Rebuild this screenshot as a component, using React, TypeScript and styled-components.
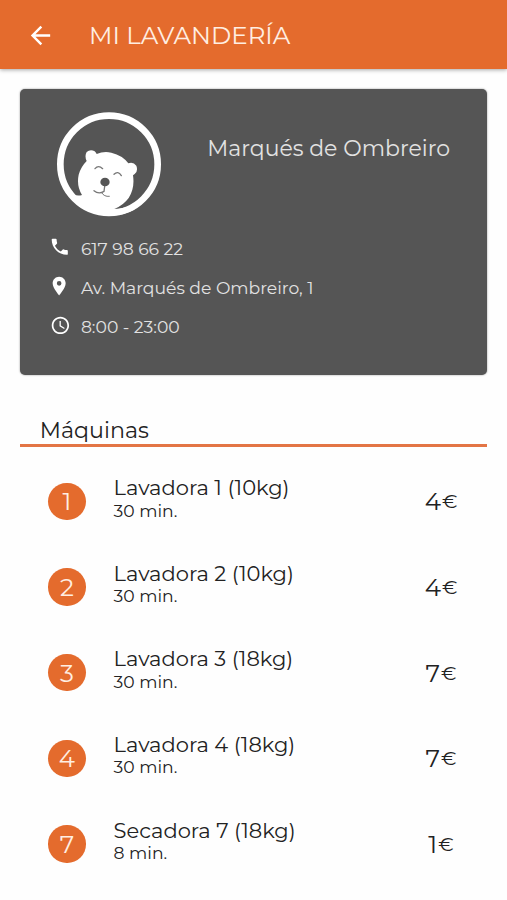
import React from "react";
import styled, { createGlobalStyle } from "styled-components";
import { MdAccessTime, MdArrowBack, MdLocationOn, MdPhone } from "react-icons/md";

const ORANGE = "#e46b2d";

const GlobalStyle = createGlobalStyle`
  * { box-sizing: border-box; }
  body {
    margin: 0;
    background: #fefefe;
    color: #222;
    font-family: Montserrat, Inter, sans-serif;
    font-weight: 400;
  }
`;

const Page = styled.div`
  width: 507px;
  height: 900px;
  overflow: hidden;
  display: flex;
  flex-direction: column;
`;

const Header = styled.header`
  flex: none;
  height: 69px;
  padding: 2px 0 0 25.5px;
  display: flex;
  align-items: center;
  background: ${ORANGE};
  color: #ffeee2;
  box-shadow: 0 1px 4px rgba(0, 0, 0, 0.35);
`;

const BackButton = styled.button`
  display: flex;
  padding: 0;
  border: 0;
  background: none;
  color: #fff;
  font-size: 29px;
`;

const Title = styled.h1`
  margin: 0 0 2px 34.5px;
  font-size: 24.5px;
  font-weight: 400;
  line-height: 30px;
  white-space: nowrap;
`;

const Card = styled.section`
  flex: none;
  height: 286px;
  margin: 20px 19.6px 0 20.4px;
  padding: 23px 0 0;
  display: flex;
  flex-direction: column;
  border-radius: 5px;
  background: #555;
  color: #e2e2e2;
  box-shadow: 0 0 2px rgba(0, 0, 0, 0.45);
`;

const CardTop = styled.div`
  height: 105px;
  padding-left: 36.5px;
  display: flex;
  align-items: flex-start;
`;

const Logo = styled.svg`
  flex: none;
  width: 104px;
  height: 105px;
`;

const ShopName = styled.h2`
  margin: 21px 0 0 46.3px;
  font-size: 22px;
  font-weight: 400;
  line-height: 31px;
  white-space: nowrap;
`;

const InfoList = styled.ul`
  margin: 12.5px 0 0 28px;
  padding: 0;
  list-style: none;
`;

const InfoRow = styled.li`
  height: 39px;
  display: grid;
  grid-template-columns: 32.5px 1fr;
  align-items: center;
  font-size: 17.2px;
`;

const InfoText = styled.span`
  margin-bottom: 2px;
`;

const InfoIcon = styled.span<{ $size: number; $indent: number }>`
  display: flex;
  margin-left: ${(p) => p.$indent}px;
  margin-bottom: 4px;
  color: #fff;
  font-size: ${(p) => p.$size}px;
`;

const SectionTitle = styled.h2`
  flex: none;
  height: 31px;
  margin: 41px 19.6px 0 20.4px;
  padding-left: 19.4px;
  border-bottom: 3px solid #e37545;
  font-size: 22.2px;
  font-weight: 400;
  line-height: 29px;
`;

const MachineList = styled.ul`
  margin: 11.7px 19.5px 0 48.2px;
  padding: 0;
  list-style: none;
`;

const MachineRow = styled.li`
  height: 85.6px;
  display: grid;
  grid-template-columns: 65.4px 1fr 93px;
  align-items: center;
`;

const Badge = styled.span`
  width: 37.4px;
  height: 37.4px;
  display: flex;
  align-items: center;
  justify-content: center;
  border-radius: 50%;
  background: ${ORANGE};
  color: #ffeee2;
  font-size: 24.5px;
`;

const MachineText = styled.div`
  margin-bottom: 4.4px;
  white-space: nowrap;
`;

const MachineName = styled.div`
  font-size: 21px;
  line-height: 23.4px;
`;

const Duration = styled.div`
  font-size: 17.2px;
  line-height: 22.6px;
`;

const Price = styled.div`
  display: flex;
  align-items: center;
  justify-content: center;
  gap: 1px;
  font-size: 24.6px;
`;

const Euro = styled.span`
  font-size: 19.5px;
`;

const machines = [
  { id: 1, name: "Lavadora 1 (10kg)", minutes: 30, price: 4 },
  { id: 2, name: "Lavadora 2 (10kg)", minutes: 30, price: 4 },
  { id: 3, name: "Lavadora 3 (18kg)", minutes: 30, price: 7 },
  { id: 4, name: "Lavadora 4 (18kg)", minutes: 30, price: 7 },
  { id: 7, name: "Secadora 7 (18kg)", minutes: 8, price: 1 },
];

const contact = [
  { icon: <MdPhone />, size: 21.5, indent: 1.1, text: "617 98 66 22" },
  { icon: <MdLocationOn />, size: 22.3, indent: -0.7, text: "Av. Marqués de Ombreiro, 1" },
  { icon: <MdAccessTime />, size: 20.8, indent: 2, text: "8:00 - 23:00" },
];

const BearLogo = () => (
  <Logo viewBox="50 36 312 315">
    <circle cx="206" cy="193" r="146" fill="none" stroke="#fff" strokeWidth="20" />
    <path
      fill="#fff"
      d="M98 283 Q112 289 125 285 Q108 258 115 224 Q122 200 139 183 Q132 168 139 156 Q150 147 163 154 Q168 159 169 162 Q190 153 213 158 Q247 166 264 190 Q279 185 288 197 Q294 213 283 222 L278 226 Q284 264 265 294 Q249 316 222 327 Q256 325 285 311 L282 329 Q206 367 128 323 Z"
    />
    <g fill="none" stroke="#777" strokeLinecap="round">
      <path d="M164 206 Q174 194 187 206" strokeWidth="4" />
      <path d="M221 223 Q233 211 243 227" strokeWidth="4" />
      <path d="M194 252 L191 274 Q175 284 161 272" strokeWidth="4" />
      <path d="M184 278 Q191 291 207 289" strokeWidth="3" />
    </g>
    <ellipse cx="194" cy="246" rx="14" ry="13" fill="#555" />
  </Logo>
);

export default function App() {
  return (
    <Page>
      <GlobalStyle />
      <Header>
        <BackButton aria-label="Volver">
          <MdArrowBack />
        </BackButton>
        <Title>MI LAVANDERÍA</Title>
      </Header>
      <Card>
        <CardTop>
          <BearLogo />
          <ShopName>Marqués de Ombreiro</ShopName>
        </CardTop>
        <InfoList>
          {contact.map((c) => (
            <InfoRow key={c.text}>
              <InfoIcon $size={c.size} $indent={c.indent}>
                {c.icon}
              </InfoIcon>
              <InfoText>{c.text}</InfoText>
            </InfoRow>
          ))}
        </InfoList>
      </Card>
      <SectionTitle>Máquinas</SectionTitle>
      <MachineList>
        {machines.map((m) => (
          <MachineRow key={m.id}>
            <Badge>{m.id}</Badge>
            <MachineText>
              <MachineName>{m.name}</MachineName>
              <Duration>{m.minutes} min.</Duration>
            </MachineText>
            <Price>
              {m.price}
              <Euro>€</Euro>
            </Price>
          </MachineRow>
        ))}
      </MachineList>
    </Page>
  );
}
